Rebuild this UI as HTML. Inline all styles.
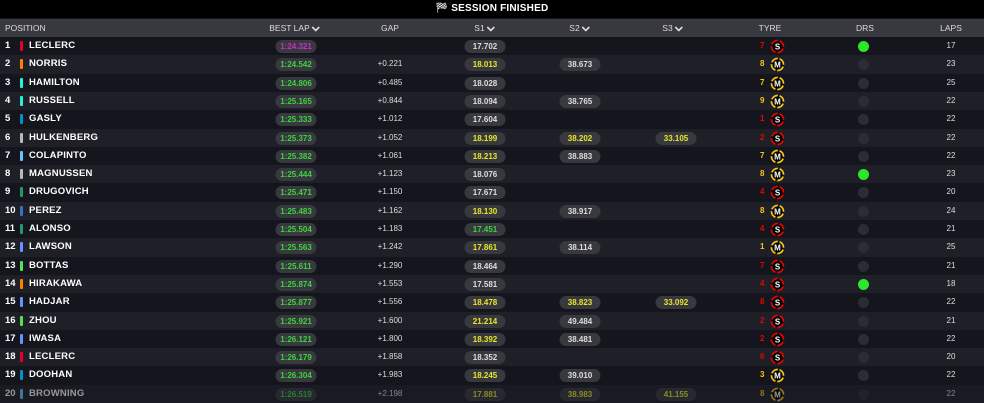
<!DOCTYPE html>
<html><head><meta charset="utf-8"><style>
*{margin:0;padding:0;box-sizing:border-box}
body{width:984px;height:400px;background:#15151e;font-family:"Liberation Sans",sans-serif;color:#fff;overflow:hidden;position:relative}
.top{position:absolute;left:0;top:0;width:984px;height:18px;background:#000;text-align:center;font-weight:bold;font-size:10px;line-height:17px;letter-spacing:.2px}
.hdr{position:absolute;left:0;top:19px;width:984px;height:18px;background:#38383f;font-size:8.5px;color:#ddd;line-height:18px}
.hdr span{position:absolute;transform:translateX(-50%);white-space:nowrap}
.hdr svg{vertical-align:-1px;margin-left:2px}
.row{position:absolute;left:0;width:984px;height:18.3px;font-size:8px;line-height:18px}
.c{position:absolute;transform:translateX(-50%);white-space:nowrap}
.pos{position:absolute;left:5px;font-weight:bold;font-size:9.5px}
.bar{position:absolute;left:20px;top:4px;width:3px;height:10px;border-radius:1px}
.nm{position:absolute;left:29px;font-weight:bold;font-size:9.5px;letter-spacing:.2px}
.pill{position:absolute;top:3px;height:13px;width:41px;border-radius:7px;background:#38383f;text-align:center;line-height:13px;transform:translateX(-50%);font-size:8px;font-weight:bold}
.g{color:#3ed23e}.p{color:#c830c8}.y{color:#e6e62a}.w{color:#ddd}
.tn{position:absolute;left:760px;font-weight:bold;font-size:8px}
.ty{position:absolute;left:770px;top:2px}
.S{color:#e10600}.M{color:#f5c518}
.drs{position:absolute;left:858px;top:4px;width:11px;height:11px;border-radius:50%;background:#2c2c33}
.drs.on{background:#2be62b}
</style></head><body>
<div class="top">🏁 SESSION FINISHED</div>
<div class="hdr">
<span style="left:5px;transform:none">POSITION</span>
<span style="left:295px">BEST LAP<svg width="9" height="6" viewBox="0 0 9 6"><path d="M1 1l3.5 3.5L8 1" stroke="#ddd" stroke-width="1.6" fill="none"/></svg></span>
<span style="left:390px">GAP</span>
<span style="left:485px">S1<svg width="9" height="6" viewBox="0 0 9 6"><path d="M1 1l3.5 3.5L8 1" stroke="#ddd" stroke-width="1.6" fill="none"/></svg></span>
<span style="left:580px">S2<svg width="9" height="6" viewBox="0 0 9 6"><path d="M1 1l3.5 3.5L8 1" stroke="#ddd" stroke-width="1.6" fill="none"/></svg></span>
<span style="left:673px">S3<svg width="9" height="6" viewBox="0 0 9 6"><path d="M1 1l3.5 3.5L8 1" stroke="#ddd" stroke-width="1.6" fill="none"/></svg></span>
<span style="left:770px">TYRE</span>
<span style="left:865px">DRS</span>
<span style="left:951px">LAPS</span>
</div>
<div id="rows"></div>
<script>
const d=[
["LECLERC","#e8002d","1:24.321","p","","17.702","w","","","","","7","S",1,17],
["NORRIS","#ff8000","1:24.542","g","+0.221","18.013","y","38.673","w","","","8","M",0,23],
["HAMILTON","#27f4d2","1:24.806","g","+0.485","18.028","w","","","","","7","M",0,25],
["RUSSELL","#27f4d2","1:25.165","g","+0.844","18.094","w","38.765","w","","","9","M",0,22],
["GASLY","#0093cc","1:25.333","g","+1.012","17.604","w","","","","","1","S",0,22],
["HULKENBERG","#b6babd","1:25.373","g","+1.052","18.199","y","38.202","y","33.105","y","2","S",0,22],
["COLAPINTO","#64c4ff","1:25.382","g","+1.061","18.213","y","38.883","w","","","7","M",0,22],
["MAGNUSSEN","#b6babd","1:25.444","g","+1.123","18.076","w","","","","","8","M",1,23],
["DRUGOVICH","#229971","1:25.471","g","+1.150","17.671","w","","","","","4","S",0,20],
["PEREZ","#3671c6","1:25.483","g","+1.162","18.130","y","38.917","w","","","8","M",0,24],
["ALONSO","#229971","1:25.504","g","+1.183","17.451","g","","","","","4","S",0,21],
["LAWSON","#6692ff","1:25.563","g","+1.242","17.861","y","38.114","w","","","1","M",0,25],
["BOTTAS","#52e252","1:25.611","g","+1.290","18.464","w","","","","","7","S",0,21],
["HIRAKAWA","#ff8000","1:25.874","g","+1.553","17.581","w","","","","","4","S",1,18],
["HADJAR","#6692ff","1:25.877","g","+1.556","18.478","y","38.823","y","33.092","y","8","S",0,22],
["ZHOU","#52e252","1:25.921","g","+1.600","21.214","y","49.484","w","","","2","S",0,21],
["IWASA","#6692ff","1:26.121","g","+1.800","18.392","y","38.481","w","","","2","S",0,22],
["LECLERC","#e8002d","1:26.179","g","+1.858","18.352","w","","","","","6","S",0,20],
["DOOHAN","#0093cc","1:26.304","g","+1.983","18.245","y","39.010","w","","","3","M",0,22],
["BROWNING","#64c4ff","1:26.519","g","+2.198","17.881","y","38.983","y","41.155","y","8","M",0,22]];
let h="";
d.forEach((r,i)=>{
const top=37+i*18.3;
const bg=i%2==0?"#15151e":"#1f1f27";
const col=r[12]=="S"?"#e10600":"#f5c518";
const tyre=`<svg class="ty" width="15" height="15" viewBox="0 0 15 15"><circle cx="7.5" cy="7.5" r="6" fill="#000" stroke="${col}" stroke-width="1.8" stroke-dasharray="7.5 1.9" transform="rotate(-70 7.5 7.5)"/><text x="7.5" y="10.3" text-anchor="middle" font-family="Liberation Sans" font-weight="bold" font-size="8" fill="#fff">${r[12]}</text></svg>`;
h+=`<div class="row" style="top:${top}px;background:${bg};${i==19?'opacity:.55':''}">
<span class="pos">${i+1}</span><span class="bar" style="background:${r[1]}"></span><span class="nm">${r[0]}</span>
<span class="pill ${r[3]}" style="left:296px">${r[2]}</span>
<span class="c w" style="left:390px">${r[4]}</span>
${r[5]?`<span class="pill ${r[6]}" style="left:485px">${r[5]}</span>`:""}
${r[7]?`<span class="pill ${r[8]}" style="left:580px">${r[7]}</span>`:""}
${r[9]?`<span class="pill ${r[10]}" style="left:676px">${r[9]}</span>`:""}
<span class="tn ${r[12]}">${r[11]}</span>${tyre}
<span class="drs ${r[13]?'on':''}"></span>
<span class="c w" style="left:951px">${r[14]}</span></div>`;});
document.getElementById("rows").innerHTML=h;
</script>
</body></html>
